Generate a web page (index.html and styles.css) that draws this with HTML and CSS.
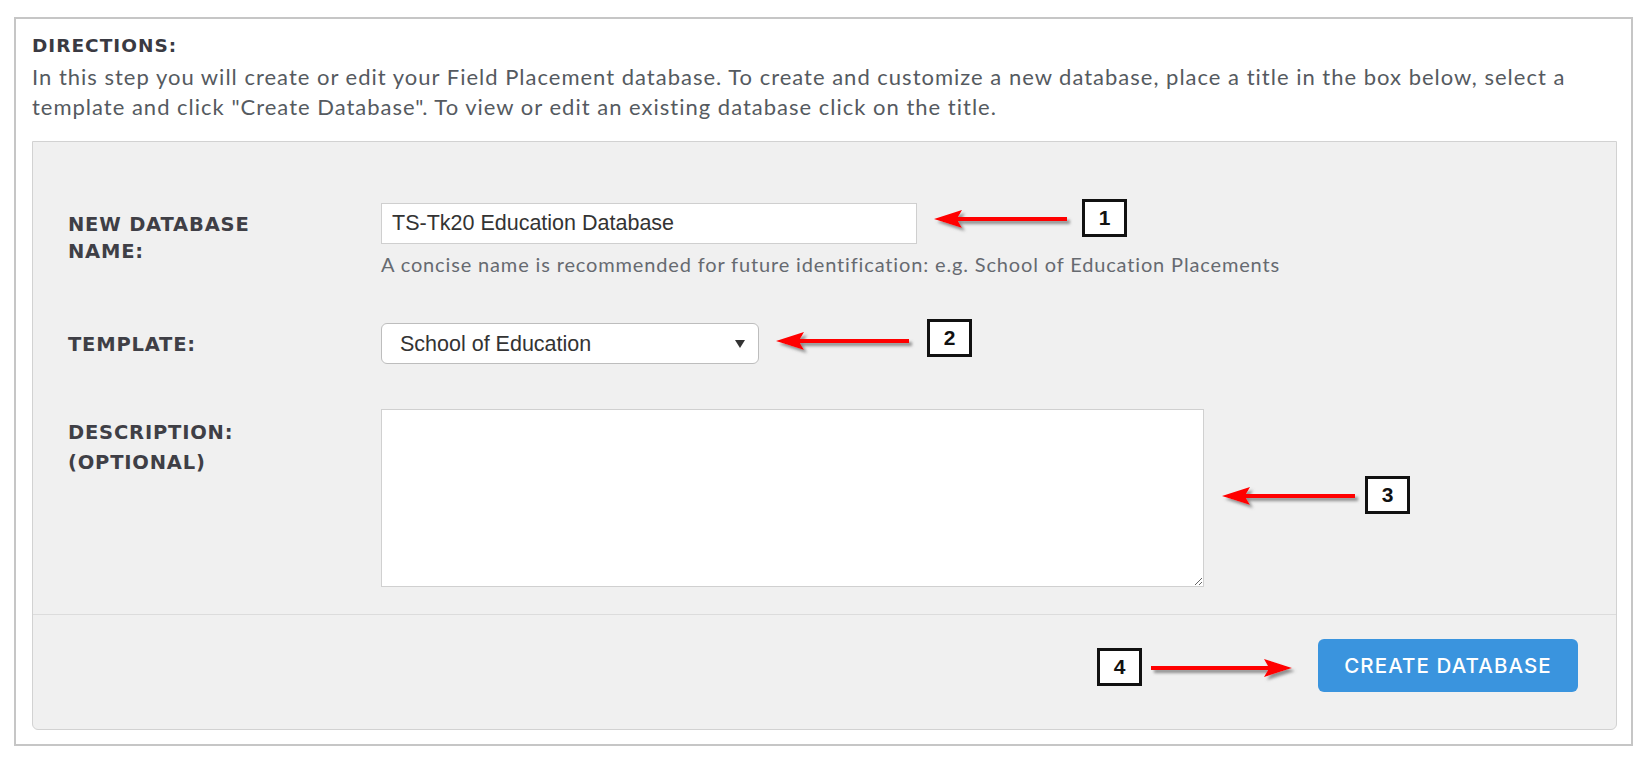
FILE: index.html
```html
<!DOCTYPE html>
<html lang="en">
<head>
<meta charset="utf-8">
<title>Create Database</title>
<link rel="stylesheet" href="styles.css">
</head>
<body>
<div class="frame">
  <div class="dir-title">DIRECTIONS:</div>
  <p class="dir-text">In this step you will create or edit your Field Placement database. To create and customize a new database, place a title in the box below, select a template and click "Create Database". To view or edit an existing database click on the title.</p>

  <div class="panel">
    <div class="panel-body">
      <div class="row row-name">
        <label class="label">NEW DATABASE<br>NAME:</label>
        <div class="control">
          <input class="text-input" type="text" value="TS-Tk20 Education Database">
          <div class="help">A concise name is recommended for future identification: e.g. School of Education Placements</div>
        </div>
      </div>
      <div class="row row-template">
        <label class="label">TEMPLATE:</label>
        <div class="control">
          <div class="select-wrap">
            <select class="select"><option>School of Education</option></select>
            <svg class="caret" width="10" height="8" viewBox="0 0 10 8"><path d="M0 0H10L5 8Z" fill="#333"/></svg>
          </div>
        </div>
      </div>
      <div class="row row-desc">
        <label class="label label-desc">DESCRIPTION:<br>(OPTIONAL)</label>
        <div class="control">
          <textarea class="textarea"></textarea>
        </div>
      </div>
    </div>
    <div class="panel-footer">
      <button class="btn" type="button">CREATE DATABASE</button>
    </div>

    <svg width="0" height="0" class="defs">
      <defs>
        <filter id="shadow" x="-20%" y="-50%" width="140%" height="200%">
          <feDropShadow dx="3" dy="3" stdDeviation="1.6" flood-color="#6e6e6e" flood-opacity="0.75"/>
        </filter>
      </defs>
    </svg>

    <svg class="arrow arrow-1" width="140" height="28" viewBox="0 0 140 28"><g filter="url(#shadow)"><path d="M1 12 L29 3 L25 10 L134 10 L134 14 L25 14 L29 21 Z" fill="#ff0000"/></g></svg>
    <div class="num num-1">1</div>

    <svg class="arrow arrow-2" width="140" height="28" viewBox="0 0 140 28"><g filter="url(#shadow)"><path d="M1 12 L29 3 L25 10 L134 10 L134 14 L25 14 L29 21 Z" fill="#ff0000"/></g></svg>
    <div class="num num-2">2</div>

    <svg class="arrow arrow-3" width="140" height="28" viewBox="0 0 140 28"><g filter="url(#shadow)"><path d="M1 12 L29 3 L25 10 L134 10 L134 14 L25 14 L29 21 Z" fill="#ff0000"/></g></svg>
    <div class="num num-3">3</div>

    <div class="num num-4">4</div>
    <svg class="arrow arrow-4" width="148" height="28" viewBox="0 0 148 28"><g filter="url(#shadow)"><path d="M142 12 L114 3 L118 10 L1 10 L1 14 L118 14 L114 21 Z" fill="#ff0000"/></g></svg>
  </div>
</div>
</body>
</html>
```
FILE: styles.css
```css
* { box-sizing: border-box; }

html, body {
  margin: 0;
  padding: 0;
  background: #ffffff;
}

body {
  width: 1652px;
  height: 766px;
  overflow: hidden;
  font-family: "Lato", "Liberation Sans", sans-serif;
}

.frame {
  margin: 17px 19px 0 14px;
  border: 2px solid #c6c6c6;
  padding: 15px 14px 14px 16px;
}

.dir-title {
  font-family: "DejaVu Sans", sans-serif;
  font-weight: 700;
  font-size: 18.5px;
  line-height: 24px;
  letter-spacing: 1px;
  color: #3a3a42;
}

.dir-text {
  margin: 4px 0 19px 0;
  font-family: "Lato", sans-serif;
  font-size: 22px;
  line-height: 30px;
  letter-spacing: 1px;
  color: #555a60;
}

.panel {
  position: relative;
  background: #f0f0f0;
  border: 1px solid #d2d2d2;
  border-radius: 0 0 6px 6px;
}

.panel-body {
  padding: 61px 0 27px 35px;
  display: flex;
  flex-direction: column;
}

.row {
  display: grid;
  grid-template-columns: 313px 1fr;
  align-items: start;
}

.row-template { margin-top: 47px; }
.row-desc { margin-top: 45px; }

.label {
  margin-top: 8px;
  font-family: "DejaVu Sans", sans-serif;
  font-weight: 700;
  font-size: 19.5px;
  line-height: 27px;
  letter-spacing: 0.8px;
  color: #3f3f46;
}

.label-desc {
  margin-top: 9px;
  line-height: 30px;
}

.control {
  display: flex;
  flex-direction: column;
  align-items: flex-start;
}

.text-input {
  width: 536px;
  height: 41px;
  margin: 0;
  padding: 0 10px;
  border: 1px solid #cfcfcf;
  background: #ffffff;
  font-family: "Liberation Sans", Arial, sans-serif;
  font-size: 21.5px;
  color: #333333;
  outline: none;
}

.help {
  margin-top: 8px;
  font-family: "Lato", sans-serif;
  font-size: 20px;
  line-height: 24px;
  letter-spacing: 0.85px;
  color: #666a70;
}

.select-wrap {
  position: relative;
  width: 378px;
  height: 41px;
}

.select {
  appearance: none;
  -webkit-appearance: none;
  width: 100%;
  height: 100%;
  margin: 0;
  padding: 0 30px 0 18px;
  border: 1px solid #bdbdbd;
  border-radius: 6px;
  background: #ffffff;
  font-family: "Liberation Sans", Arial, sans-serif;
  font-size: 21.5px;
  color: #333333;
  outline: none;
}

.caret {
  position: absolute;
  right: 14px;
  top: 17px;
  pointer-events: none;
}

.textarea {
  display: block;
  width: 823px;
  height: 178px;
  margin: 0;
  border: 1px solid #d0d0d0;
  background: #ffffff;
  font-family: "Liberation Sans", Arial, sans-serif;
  font-size: 18px;
  resize: both;
  outline: none;
}

.panel-footer {
  border-top: 1px solid #dcdcdc;
  padding: 24px 38px 37px 0;
  display: flex;
  justify-content: flex-end;
}

.btn {
  width: 260px;
  height: 53px;
  margin: 0;
  padding: 0;
  border: none;
  border-radius: 6px;
  background: #3a94de;
  color: #ffffff;
  font-family: "Inter", sans-serif;
  font-weight: 500;
  font-size: 20.5px;
  letter-spacing: 1.1px;
  cursor: pointer;
}

/* annotations overlaid on the panel */
.defs { position: absolute; }

.arrow {
  position: absolute;
  overflow: visible;
}

.arrow-1 { left: 900px; top: 65px; }
.arrow-2 { left: 742px; top: 187px; }
.arrow-3 { left: 1188px; top: 342px; }
.arrow-4 { left: 1117px; top: 514px; }

.num {
  position: absolute;
  width: 45px;
  height: 38px;
  border: 3px solid #111111;
  background: #ffffff;
  display: flex;
  align-items: center;
  justify-content: center;
  font-family: "Liberation Sans", Arial, sans-serif;
  font-weight: 700;
  font-size: 21px;
  color: #111111;
}

.num-1 { left: 1049px; top: 57px; }
.num-2 { left: 894px; top: 177px; }
.num-3 { left: 1332px; top: 334px; }
.num-4 { left: 1064px; top: 506px; }
```
